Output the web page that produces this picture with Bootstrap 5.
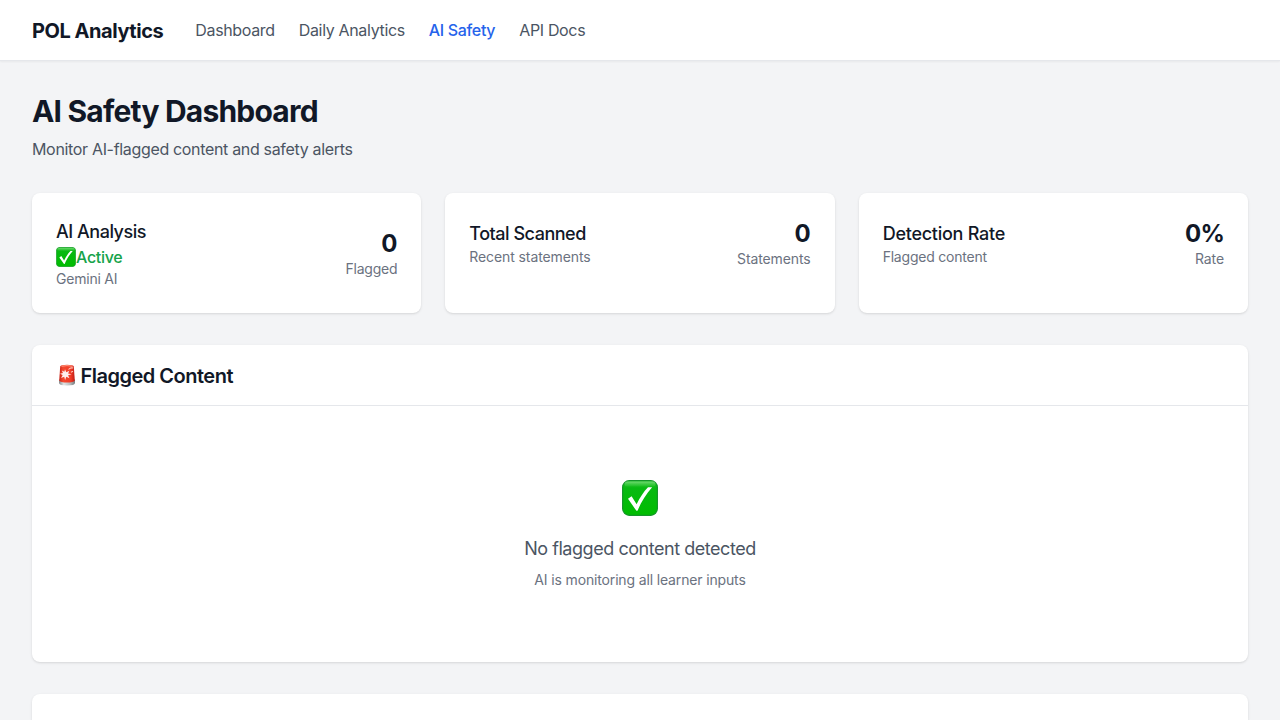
<!DOCTYPE html>
<html lang="en">
<head>
<meta charset="utf-8">
<meta name="viewport" content="width=device-width, initial-scale=1">
<title>AI Safety Dashboard</title>
<link href="https://cdn.jsdelivr.net/npm/bootstrap@5.3.0/dist/css/bootstrap.min.css" rel="stylesheet">
<style>
  body { background: #f3f4f6; color: #111827; font-family: Inter, "Liberation Sans", sans-serif; font-size: 16px; line-height: 24px; }
  .topbar { height: 61px; background: #fff; border-bottom: 1px solid #e5e7eb; box-shadow: 0 1px 2px rgba(0,0,0,.05); }
  .topbar .navbar-brand { font-size: 20px; line-height: 26px; padding-top: 2px; font-weight: 700; color: #111827; letter-spacing: -.45px; margin-right: 32px; }
  .topbar .navbar-nav .nav-link { color: #4b5563; padding: 0; letter-spacing: -.34px; }
  .topbar .navbar-nav .nav-link.active { color: #2563eb; font-weight: 500; }
  .page { padding: 32px 32px 0; }
  .page-title { font-size: 30px; line-height: 36px; font-weight: 700; letter-spacing: -.8px; }
  .lede { color: #4b5563; letter-spacing: -.33px; }
  .panel { background: #fff; border-radius: 8px; box-shadow: 0 1px 3px rgba(0,0,0,.1), 0 1px 2px -1px rgba(0,0,0,.1); }
  .stats { display: grid; grid-template-columns: repeat(3, 1fr); gap: 24px; margin-bottom: 32px; }
  .stat-title { font-size: 18px; line-height: 26px; padding-top: 2px; font-weight: 500; letter-spacing: -.48px; }
  .stat-title.loose { letter-spacing: -.26px; }
  .stat-value { font-size: 24px; line-height: 30px; padding-top: 2px; font-weight: 700; }
  .stat-value.percent { letter-spacing: -.8px; }
  .note { font-size: 14px; line-height: 20px; color: #6b7280; letter-spacing: -.15px; }
  .stats .note { letter-spacing: -.1px; }
  .stats .note.tight { letter-spacing: -.22px; }
  .status { color: #16a34a; font-weight: 500; letter-spacing: -.3px; height: 24px; }
  .panel-head { padding: 16px 24px; border-bottom: 1px solid #e5e7eb; }
  .panel-head h2 { height: 28px; font-size: 20px; line-height: 26px; font-weight: 600; letter-spacing: -.5px; }
  .panel-head span { padding-top: 2px; }
  .empty { padding: 72px 24px; }
  .empty-text { font-size: 18px; line-height: 26px; padding-top: 2px; color: #4b5563; letter-spacing: -.46px; }
  .next-panel { margin-top: 32px; border-radius: 8px 8px 0 0; }
</style>
</head>
<body class="vh-100 d-flex flex-column">
<svg width="0" height="0" class="position-absolute" aria-hidden="true">
  <defs>
    <linearGradient id="green" x1="0" y1="0" x2="0" y2="1">
      <stop offset="0" stop-color="#25c52b"/><stop offset=".22" stop-color="#08b912"/><stop offset="1" stop-color="#00bd00"/>
    </linearGradient>
    <linearGradient id="gloss" x1="0" y1="0" x2="0" y2="1">
      <stop offset="0" stop-color="#8fe28e" stop-opacity=".7"/><stop offset="1" stop-color="#4fd052" stop-opacity=".2"/>
    </linearGradient>
    <linearGradient id="red" x1="0" y1="0" x2="1" y2="0">
      <stop offset="0" stop-color="#c92317"/><stop offset=".25" stop-color="#f4492f"/><stop offset=".75" stop-color="#f13b27"/><stop offset="1" stop-color="#bd1c16"/>
    </linearGradient>
    <linearGradient id="metal" x1="0" y1="0" x2="1" y2="0">
      <stop offset="0" stop-color="#85898b"/><stop offset=".3" stop-color="#e2e4e4"/><stop offset=".7" stop-color="#b7babb"/><stop offset="1" stop-color="#777b7d"/>
    </linearGradient>
    <symbol id="check" viewBox="0 0 36 36">
      <rect x=".6" y=".6" width="34.8" height="34.8" rx="6.8" fill="url(#green)" stroke="#16962b" stroke-width="1.2"/>
      <rect x="2.5" y="1.6" width="31" height="5" rx="2.5" fill="url(#gloss)"/>
      <path d="M6 18.800 9.600 16.200 14.600 24.200C18 17.600 21.600 11.800 26 7.300L30.200 7.200C24.200 13.700 19.400 21.500 15.500 30.800H14.400Z" fill="#fff"/>
    </symbol>
  </defs>
</svg>

<nav class="topbar navbar navbar-expand p-0 px-4 flex-shrink-0">
  <div class="d-flex align-items-center ps-2">
    <a class="navbar-brand pb-0" href="#">POL Analytics</a>
    <div class="navbar-nav gap-4">
      <a class="nav-link" href="#">Dashboard</a>
      <a class="nav-link" href="#">Daily Analytics</a>
      <a class="nav-link active" href="#">AI Safety</a>
      <a class="nav-link" href="#">API Docs</a>
    </div>
  </div>
</nav>

<main class="page flex-fill d-flex flex-column">
  <h1 class="page-title mb-2">AI Safety Dashboard</h1>
  <p class="lede mb-4">Monitor AI-flagged content and safety alerts</p>
  <section class="stats mt-2">
    <div class="panel p-4">
      <div class="d-flex justify-content-between align-items-center">
        <div>
          <h3 class="stat-title mb-0">AI Analysis</h3>
          <div class="status d-flex align-items-center"><svg width="20" height="20"><use href="#check"/></svg><span>Active</span></div>
          <div class="note tight">Gemini AI</div>
        </div>
        <div class="text-end"><div class="stat-value">0</div><div class="note tight">Flagged</div></div>
      </div>
    </div>
    <div class="panel p-4">
      <div class="d-flex justify-content-between align-items-center">
        <div><h3 class="stat-title mb-0">Total Scanned</h3><div class="note">Recent statements</div></div>
        <div class="text-end"><div class="stat-value">0</div><div class="note">Statements</div></div>
      </div>
    </div>
    <div class="panel p-4">
      <div class="d-flex justify-content-between align-items-center">
        <div><h3 class="stat-title loose mb-0">Detection Rate</h3><div class="note tight">Flagged content</div></div>
        <div class="text-end"><div class="stat-value percent">0%</div><div class="note">Rate</div></div>
      </div>
    </div>
  </section>

  <section class="panel">
    <div class="panel-head">
      <h2 class="d-flex align-items-center mb-0">
        <svg width="24.5" height="24" viewBox="0 0 24.5 24">
          <path d="M3 16.500h16v3.500q0 2.500-8 2.500t-8-2.500z" fill="url(#metal)"/>
          <path d="M4.200 3.500Q4.400 1.800 11 1.800T17.800 3.500L18.800 17.500Q17.500 19.500 11 19.500T3.200 17.500Z" fill="url(#red)"/>
          <path d="M5.500 3.300Q11 1.900 16.600 3.300" stroke="#ff9a83" fill="none"/>
          <path d="m9 6.300 1.300 3 3-1.500-1.200 2.700 3.400.8-3.400 1 1.400 3-3.200-1.600-1.200 3.200-.9-3.200-3.100 1.300 1.600-2.900-2.700-1.400 3-.6-1.200-2.600 2.600 1.300z" fill="#fff" fill-opacity=".92"/>
          <path d="M12.500 6.500Q14.500 4.300 17 5M15 9.200l2-1" stroke="#ffc8ba" stroke-width="1.1" fill="none"/>
        </svg><span>Flagged Content</span>
      </h2>
    </div>
    <div class="empty text-center">
      <svg class="d-block mx-auto mb-3" width="36" height="40" viewBox="0 0 36 40"><use href="#check" y="2" width="36" height="36"/></svg>
      <p class="empty-text mb-2">No flagged content detected</p>
      <p class="note mb-0">AI is monitoring all learner inputs</p>
    </div>
  </section>
  <section class="panel next-panel flex-fill"></section>
</main>
<script src="https://cdn.jsdelivr.net/npm/bootstrap@5.3.0/dist/js/bootstrap.bundle.min.js"></script>
</body>
</html>
